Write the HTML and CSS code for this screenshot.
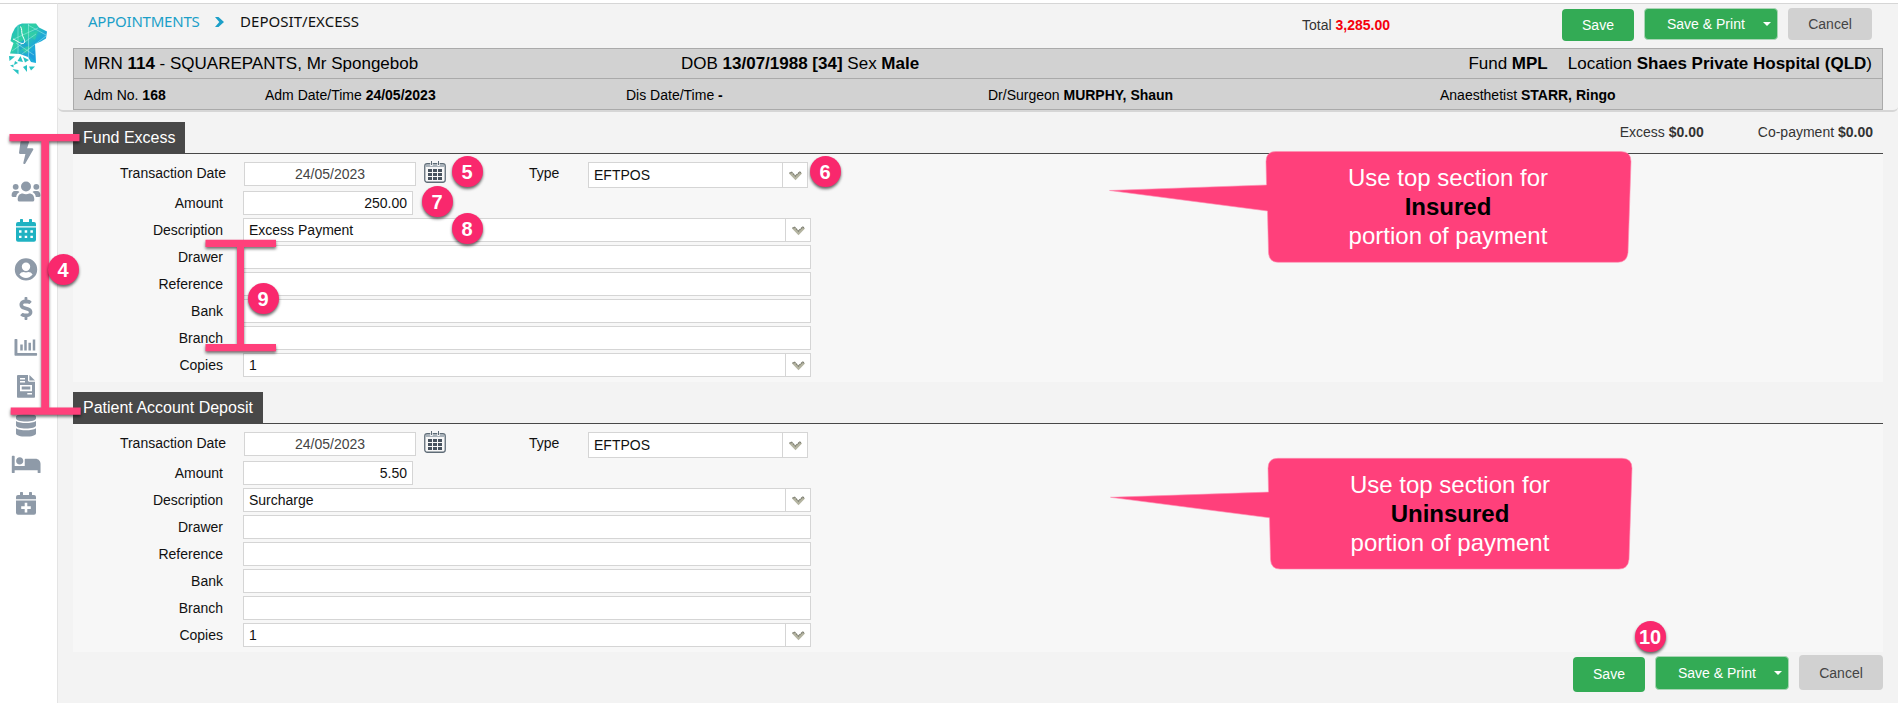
FILE: index.html
```html
<!DOCTYPE html>
<html lang="en">
<head>
<meta charset="utf-8">
<title>Deposit/Excess</title>
<link rel="stylesheet" href="styles.css">
</head>
<body>
<svg class="defs" width="0" height="0">
  <defs>
    <symbol id="cal" viewBox="0 0 22 22">
      <rect x=".75" y="2.75" width="20.5" height="18.5" rx="2.5" fill="#f7f7f7" stroke="#5f6c77" stroke-width="1.3"/>
      <path d="M1.5 3.5h19V6h-19z" fill="#a9b2ba"/>
      <path d="M7.5 0v5M14.5 0v5" stroke="#f7f7f7" stroke-width="2.4"/>
      <path d="M7.5 0v4M14.5 0v4" stroke="#5f6c77"/>
      <path d="M4 8h4v3H4zM9 8h4v3H9zM14 8h4v3h-4zM4 12h4v3H4zM9 12h4v3H9zM14 12h4v3h-4zM4 16h4v3H4zM9 16h4v3H9zM14 16h4v3h-4z" fill="#47525e"/>
    </symbol>
    <symbol id="chev" viewBox="0 0 13 10">
      <path d="M0 2.5 2.2.6 6.5 4.6 10.800.6 13 2.500 6.500 9.200z" fill="#b5b5a2"/>
      <path d="M.5 2.300 2.300 1l4.200 4 4.200-4 1.800 1.300" fill="none" stroke="#7c7d72" stroke-width="1.300" stroke-dasharray="1.500 .8"/>
    </symbol>
  </defs>
</svg>

<div class="app">
  <aside class="sidebar">
    <svg class="logo" viewBox="0 0 40 52" width="40" height="52">
      <defs><linearGradient id="lg" x1="0" y1="0" x2="1" y2="1"><stop offset="0" stop-color="#1fb8c4"/><stop offset=".35" stop-color="#2fd0a4"/><stop offset=".6" stop-color="#1fa8d8"/><stop offset="1" stop-color="#20b9e4"/></linearGradient></defs>
      <path d="M4 11 7 5l3-3 4-1.500h14l3 4 8 4-1 7-5 3-6 2.500 1 19-5-1-3-5-8-3-10-.5 3.500-10.500-3-2z" fill="url(#lg)"/>
      <path d="M9 21 18 31 24 24zM18 11l9 6 3-9zM10 5l7 6V1z" fill="#35d3a0" opacity=".65"/>
      <path d="M20 32l7-5 .5 12zM10 20l6-3 4 6-8 4z" fill="#1a93dd" opacity=".55"/>
      <path d="M10 2v29M20.500 1v35M4 28l24-17M6 16 30 5M14 31l24-18M8 20l18 12M20 2l18 10" stroke="#bff3f0" stroke-width=".6" fill="none" opacity=".75"/>
      <path d="M12.500 3.500c2 3 .5 5 2 9 1.500 4 3.500 6 1 8C12 21 9 17.500 5 16" fill="none" stroke="#fff" stroke-width="1"/>
      <path d="M1 33l6 .5-5.500 4.500zM9.500 38l3-5 2.500 6zM15 34l6 3-4 2.500zM2 42.500l3.500-1v3zM4.500 46l6 1v4.500zM7 38l3 2-4 2zM15 44l4-2v7zM21 43.500h6l-4 4z" fill="#27c3c3"/>
    </svg>
    <nav class="nav">
      <svg viewBox="0 0 32 39"><g transform="translate(9 8) scale(.0449)"><path d="M296 160H180.600l42.600-129.800C227.200 15 215.700 0 200 0H56C44 0 33.800 8.900 32.200 20.800l-32 240C-1.700 275.200 9.500 288 24 288h118.700L96.600 482.500c-3.600 15.200 8 29.500 23.300 29.500 8.400 0 16.400-4.400 20.800-12l176-304c9.300-15.900-2.200-36-20.700-36z"/></g></svg>
      <svg viewBox="0 0 32 39"><circle cx="16" cy="14.500" r="5"/><circle cx="5.700" cy="14.800" r="2.900"/><circle cx="26.300" cy="14.800" r="2.900"/><path d="M7.700 27.500c0-4 2-6 5-6 2 .9 4.600.9 6.600 0 3 0 5 2 5 6v.5a1.700 1.700 0 0 1-1.700 1.600H9.400A1.700 1.700 0 0 1 7.700 28zM1.600 23.500c0-3 1.200-4.500 3.200-4.500h2.400c1 0 1.700.3 2.300 1-2 1.200-3 2.700-3.300 4.900H2.900c-.8 0-1.300-.5-1.300-1.400zM30.400 23.500c0-3-1.200-4.500-3.200-4.500h-2.400c-1 0-1.700.3-2.300 1 2 1.200 3 2.700 3.300 4.900h3.300c.8 0 1.300-.5 1.300-1.400z"/></svg>
      <svg class="on" viewBox="0 0 32 39"><path d="M6 13a2 2 0 0 1 2-2h2V8.700a.7.700 0 0 1 .7-.7h1.600a.7.700 0 0 1 .7.700V11h6V8.700a.7.700 0 0 1 .7-.7h1.600a.7.700 0 0 1 .7.700V11h2a2 2 0 0 1 2 2v2.200H6z"/><path fill-rule="evenodd" d="M6 16.500h20v12.300a2 2 0 0 1-2 2H8a2 2 0 0 1-2-2zm3 2.800v2.400h2.500v-2.400zm5.700 0v2.400h2.500v-2.400zm5.700 0v2.400h2.500v-2.400zM9 24.700v2.400h2.500v-2.400zm5.700 0v2.400h2.500v-2.400zm5.700 0v2.400h2.500v-2.400z"/></svg>
      <svg viewBox="0 0 32 39"><path fill-rule="evenodd" d="M16 8.200a11.200 11.200 0 1 0 0 22.400 11.200 11.200 0 0 0 0-22.400zm0 4.300a4.200 4.200 0 1 1 0 8.400 4.200 4.200 0 0 1 0-8.400zm-6.600 12c1-1.700 2.500-2.500 4.200-2.500 1.600.6 3.200.6 4.800 0 1.700 0 3.200.8 4.200 2.500-1.500 2-4 3.400-6.600 3.400s-5-1.300-6.600-3.400z"/></svg>
      <svg viewBox="0 0 32 39"><g transform="translate(9.500 8) scale(.0449)"><path d="M209.200 233.400l-108-31.600C88.700 198.200 80 186.500 80 173.500c0-16.300 13.200-29.500 29.500-29.500h66.300c12.200 0 24.200 3.700 34.200 10.500 6.100 4.100 14.300 3.100 19.500-2l34.800-34c7.100-6.900 6.100-18.400-1.800-24.500C238 74.800 207.400 64.100 176 64V16c0-8.800-7.200-16-16-16h-32c-8.800 0-16 7.200-16 16v48h-2.500C45.800 64-5.400 118.700.5 183.600c4.200 46.100 39.400 83.600 83.800 96.600l102.500 30c12.500 3.700 21.200 15.300 21.200 28.300 0 16.300-13.200 29.500-29.500 29.500h-66.300C100 368 88 364.300 78 357.500c-6.100-4.100-14.300-3.100-19.500 2l-34.800 34c-7.100 6.900-6.100 18.400 1.800 24.500 24.500 19.200 55.100 29.900 86.500 30v48c0 8.800 7.200 16 16 16h32c8.800 0 16-7.200 16-16v-48.200c46.600-.9 90.300-28.600 105.700-72.700 21.500-61.600-14.600-124.800-72.500-141.700z"/></g></svg>
      <svg viewBox="0 0 32 39"><path d="M4.500 11.600c0-.4.3-.6.700-.6h1.500c.4 0 .7.200.7.600v13.300h19c.4 0 .7.300.7.700v1.500c0 .4-.3.700-.7.700H5.200a.7.700 0 0 1-.7-.7z"/><path d="M11.500 16.500v6M15.500 12v10.500M19.700 14.800v7.700M24 11.600v10.900" fill="none" stroke="#8e9aa8" stroke-width="2.500" stroke-linecap="butt"/></svg>
      <svg viewBox="0 0 32 39"><path fill-rule="evenodd" d="M8.200 8H18v5.500c0 .7.500 1.200 1.200 1.200H25v15c0 .7-.5 1.100-1.100 1.100H8.200c-.7 0-1.200-.4-1.200-1.100V9.200C7 8.500 7.500 8 8.200 8zM10 11v1.400h5V11zm0 3v1.400h5V14zm0 4v6.200h12V18zm1.700 1.600h8.600v3h-8.600zM17.300 26v1.400H22V26z"/><path d="M19.400 8 25 13.400h-5.600z"/></svg>
      <svg viewBox="0 0 32 39"><path d="M6 10.700C6 9 10.500 8 16 8s10 1 10 2.700v1.700c0 1.700-4.500 3-10 3s-10-1.300-10-3zM6 15c2 1.400 6 2.100 10 2.100s8-.7 10-2.100v4.500c0 1.700-4.500 3-10 3s-10-1.300-10-3zM6 22.200c2 1.400 6 2.100 10 2.100s8-.7 10-2.100v5.200c0 1.700-4.500 3.200-10 3.200S6 29.100 6 27.400z"/></svg>
      <svg viewBox="0 0 32 39"><g transform="translate(1.800 8) scale(.0449)"><path d="M176 256c44.110 0 80-35.890 80-80s-35.890-80-80-80-80 35.890-80 80 35.890 80 80 80zm352-128H304c-8.840 0-16 7.160-16 16v144H64V80c0-8.840-7.160-16-16-16H16C7.160 64 0 71.160 0 80v352c0 8.840 7.160 16 16 16h32c8.840 0 16-7.160 16-16v-48h512v48c0 8.840 7.160 16 16 16h32c8.840 0 16-7.160 16-16V240c0-61.860-50.140-112-112-112z"/></g></svg>
      <svg viewBox="0 0 32 39"><path d="M6 13a2 2 0 0 1 2-2h2V8.700a.7.700 0 0 1 .7-.7h1.600a.7.700 0 0 1 .7.700V11h6V8.700a.7.700 0 0 1 .7-.7h1.600a.7.700 0 0 1 .7.700V11h2a2 2 0 0 1 2 2v2.200H6z"/><path fill-rule="evenodd" d="M6 16.500h20v12.300a2 2 0 0 1-2 2H8a2 2 0 0 1-2-2zm8.700 2.300v3.500h-3.500v2.600h3.500v3.500h2.600v-3.500h3.500v-2.600h-3.500v-3.500z"/></svg>
    </nav>
  </aside>

  <main class="main">
    <header class="head">
      <div class="topbar">
        <div class="crumbs"><a class="crumb-link">APPOINTMENTS</a><svg class="crumb-sep" viewBox="0 0 9 10" width="9" height="10"><path d="M0 0h3.500L9 5l-5.500 5H0l4.300-5z" fill="#1b9fc8"/></svg><span class="crumb-here">DEPOSIT/EXCESS</span></div>
        <div class="total">Total <b>3,285.00</b></div>
        <div class="actions">
          <span class="btn save">Save</span><span class="btn split">Save &amp; Print<i class="caret"></i></span><span class="btn cancel">Cancel</span>
        </div>
      </div>
      <div class="patient">
        <div class="prow big"><span class="c1">MRN <b>114</b> - SQUAREPANTS, Mr Spongebob</span><span class="c2">DOB <b>13/07/1988 [34]</b> Sex <b>Male</b></span><span class="c3"><span>Fund <b>MPL</b></span><span>Location <b>Shaes Private Hospital (QLD</b>)</span></span></div>
        <div class="prow small"><span>Adm No. <b>168</b></span><span>Adm Date/Time <b>24/05/2023</b></span><span>Dis Date/Time <b>-</b></span><span>Dr/Surgeon <b>MURPHY, Shaun</b></span><span>Anaesthetist <b>STARR, Ringo</b></span></div>
      </div>
    </header>

    <section class="section">
      <div class="sec-head"><h2 class="tab">Fund Excess</h2><div class="sums"><span>Excess <b>$0.00</b></span><span>Co-payment <b>$0.00</b></span></div></div>
      <div class="form">
        <div class="row first"><label class="lab">Transaction Date</label><div class="field date">24/05/2023</div><svg class="cal" width="22" height="22"><use href="#cal"/></svg><label class="type">Type</label><div class="field select short"><span>EFTPOS</span><i class="dd"><svg width="13" height="10"><use href="#chev"/></svg></i></div></div>
        <div class="row amt"><label class="lab">Amount</label><div class="field amount">250.00</div></div>
        <div class="row"><label class="lab">Description</label><div class="field select"><span>Excess Payment</span><i class="dd"><svg width="13" height="10"><use href="#chev"/></svg></i></div></div>
        <div class="row"><label class="lab">Drawer</label><div class="field"></div></div>
        <div class="row"><label class="lab">Reference</label><div class="field"></div></div>
        <div class="row"><label class="lab">Bank</label><div class="field"></div></div>
        <div class="row"><label class="lab">Branch</label><div class="field"></div></div>
        <div class="row"><label class="lab">Copies</label><div class="field select"><span>1</span><i class="dd"><svg width="13" height="10"><use href="#chev"/></svg></i></div></div>
      </div>
    </section>

    <section class="section">
      <div class="sec-head"><h2 class="tab">Patient Account Deposit</h2></div>
      <div class="form">
        <div class="row first"><label class="lab">Transaction Date</label><div class="field date">24/05/2023</div><svg class="cal" width="22" height="22"><use href="#cal"/></svg><label class="type">Type</label><div class="field select short"><span>EFTPOS</span><i class="dd"><svg width="13" height="10"><use href="#chev"/></svg></i></div></div>
        <div class="row amt"><label class="lab">Amount</label><div class="field amount">5.50</div></div>
        <div class="row"><label class="lab">Description</label><div class="field select"><span>Surcharge</span><i class="dd"><svg width="13" height="10"><use href="#chev"/></svg></i></div></div>
        <div class="row"><label class="lab">Drawer</label><div class="field"></div></div>
        <div class="row"><label class="lab">Reference</label><div class="field"></div></div>
        <div class="row"><label class="lab">Bank</label><div class="field"></div></div>
        <div class="row"><label class="lab">Branch</label><div class="field"></div></div>
        <div class="row"><label class="lab">Copies</label><div class="field select"><span>1</span><i class="dd"><svg width="13" height="10"><use href="#chev"/></svg></i></div></div>
      </div>
    </section>

    <footer class="foot actions">
      <span class="btn save">Save</span><span class="btn split">Save &amp; Print<i class="caret"></i></span><span class="btn cancel">Cancel</span>
    </footer>
  </main>
</div>

<svg class="overlay" width="1898" height="703" viewBox="0 0 1898 703">
  <g class="bracket">
    <path d="M41.300 134H49v280h-7.700z"/>
    <path d="M9.500 134h70v7.200h-70zM10.700 407.500h70v7.200h-70z"/>
    <path d="M237 240h7v111h-7z"/>
    <path d="M205.500 239.700H276v7.200h-70.500zM205.500 344H276v7.200h-70.500z"/>
  </g>
  <g class="bubble">
    <path d="M1276 151.500h345q10 0 10 10l-3 91q-1 9.800-10 9.800h-340q-9 0-9.500-9.800l-1-41.500-158-20.500 157-5.500-.5-23.500q0-10 10-10z"/>
    <path d="M1278 458.300h344q10 0 10 10l-3 91q-1 9.800-10 9.800h-339q-9 0-9.500-9.800l-1-41.500-159-20.500 158-5.200-.5-23.800q0-10 10-10z"/>
  </g>
</svg>
<div class="bubble-text one">Use top section for<br><b>Insured</b><br>portion of payment</div>
<div class="bubble-text two">Use top section for<br><b>Uninsured</b><br>portion of payment</div>
<span class="badge b4">4</span>
<span class="badge b5">5</span>
<span class="badge b6">6</span>
<span class="badge b7">7</span>
<span class="badge b8">8</span>
<span class="badge b9">9</span>
<span class="badge b10">10</span>
</body>
</html>
```
FILE: styles.css
```css
* { box-sizing: border-box; }
body { margin: 0; width: 1898px; height: 703px; overflow: hidden; position: relative; background: #fff; color: #111; font: 14px/16px "Liberation Sans", Arial, sans-serif; }
.defs { position: absolute; }
.app { display: flex; height: 703px; }
.sidebar { width: 58px; margin-top: 3px; border-top: 1px solid #d6d6d6; border-right: 1px solid #e4e4e4; background: #fff; flex: none; }
.logo { display: block; margin: 19px 0 0 8px; }
.nav { display: flex; flex-direction: column; margin: 58px 0 0 10px; }
.nav svg { width: 32px; height: 39px; fill: #8e9aa8; }
.nav svg.on { fill: #1fb2c2; }

.main { flex: 1; margin-top: 3px; border-top: 1px solid #d6d6d6; background: #f3f3f3; }
.head { height: 108px; padding: 4px 15px 0; border-bottom: 2px solid #d6d6d6; border-radius: 0 0 5px 5px; }
.topbar { display: flex; height: 40px; padding-left: 15px; }
.crumbs { display: flex; width: 1214px; padding-top: 2px; font: 15px/22px "Noto Sans", "Open Sans", sans-serif; }
.crumb-link { width: 127px; color: #1b9fc8; letter-spacing: -.22px; }
.crumb-sep { margin: 7px 16px 0 0; }
.crumb-here { letter-spacing: .05px; }
.total { width: 260px; padding-top: 9px; color: #333; }
.total b { color: #f5000c; }
.actions { display: flex; align-items: flex-start; }
.btn { display: flex; align-items: center; justify-content: center; height: 32px; border-radius: 4px; font-size: 14px; color: #fff; flex: none; }
.save { width: 72px; margin: 1px 10px 0 0; background: #33ab55; }
.split { width: 134px; margin-right: 10px; justify-content: flex-start; padding-left: 22px; background: #33ab55; border: 1px solid #a9d5b5; }
.caret { margin-left: 18px; border: 4px solid transparent; border-top-color: #fff; border-bottom: 0; }
.cancel { width: 84px; background: #d1d1d1; color: #444; }
.patient { border: 1px solid #aaa; background: #d2d2d2; height: 62px; }
.prow { display: flex; padding: 0 10px; white-space: nowrap; color: #000; }
.big { height: 30px; font-size: 17px; line-height: 29px; border-bottom: 1px solid #aaa; }
.c1 { width: 597px; }
.c2 { flex: 1; }
.c3 { display: flex; gap: 20px; }
.small { line-height: 32px; }
.small span:nth-child(1) { width: 181px; }
.small span:nth-child(2) { width: 361px; }
.small span:nth-child(3) { width: 362px; }
.small span:nth-child(4) { width: 452px; }

.section { margin: 10px 15px 0; height: 260px; }
.sec-head { display: flex; justify-content: space-between; height: 32px; border-bottom: 1px solid #484848; }
.tab { margin: 0; height: 31px; padding: 0 10px; background: #484848; color: #fff; font-size: 16px; font-weight: 400; line-height: 31px; }
.sums { display: flex; gap: 54px; padding: 2px 10px 0 0; color: #333; }
.form { height: 228px; padding-top: 8px; background: #f7f7f7; }
.row { display: flex; height: 24px; margin-bottom: 3px; }
.lab { width: 150px; margin-right: 20px; text-align: right; line-height: 24px; }
.field { width: 568px; height: 24px; border: 1px solid #d5d5d5; background: #fff; line-height: 23px; }
.first { height: 26px; }
.first .lab { width: 153px; margin-right: 18px; line-height: 22px; }
.date { width: 172px; text-align: center; color: #444; line-height: 23px; }
.cal { margin: -1px 83px 0 8px; }
.type { width: 59px; line-height: 22px; }
.select { display: flex; justify-content: space-between; padding-left: 5px; }
.short { width: 220px; height: 26px; line-height: 24px; }
.dd { display: flex; align-items: center; justify-content: center; width: 25px; padding-top: 1px; border-left: 1px solid #d5d5d5; }
.amount { width: 170px; padding-right: 5px; text-align: right; }
.foot { justify-content: flex-end; padding: 3px 15px 0; }
.foot .btn { height: 35px; }
.foot .save { margin: 2px 10px 0 0; padding-bottom: 2px; }
.foot .split { margin-top: 1px; height: 34px; }

.overlay { position: absolute; left: 0; top: 0; pointer-events: none; }
.bracket { fill: #ff407b; filter: drop-shadow(0 2px 1.5px rgba(0,0,0,.55)); }
.bubble { fill: #ff407b; stroke: #ff8fb2; stroke-width: .6; }
.bubble-text { position: absolute; width: 360px; text-align: center; color: #fff; font-size: 24px; line-height: 29px; }
.bubble-text b { color: #000; }
.one { left: 1268px; top: 163px; }
.two { left: 1270px; top: 470px; }
.badge { position: absolute; width: 31px; height: 31px; padding-right: 1px; border-radius: 50%; background: #f9286d; color: #fff; font-weight: 700; font-size: 20px; line-height: 32px; text-align: center; box-shadow: 0 2px 3px rgba(0,0,0,.6); }
.b4 { left: 48px; top: 254px; }
.b5 { left: 452px; top: 156px; }
.b6 { left: 810px; top: 156px; }
.b7 { left: 422px; top: 186px; }
.b8 { left: 452px; top: 213px; }
.b9 { left: 248px; top: 283px; }
.b10 { left: 1635px; top: 621px; }
```
